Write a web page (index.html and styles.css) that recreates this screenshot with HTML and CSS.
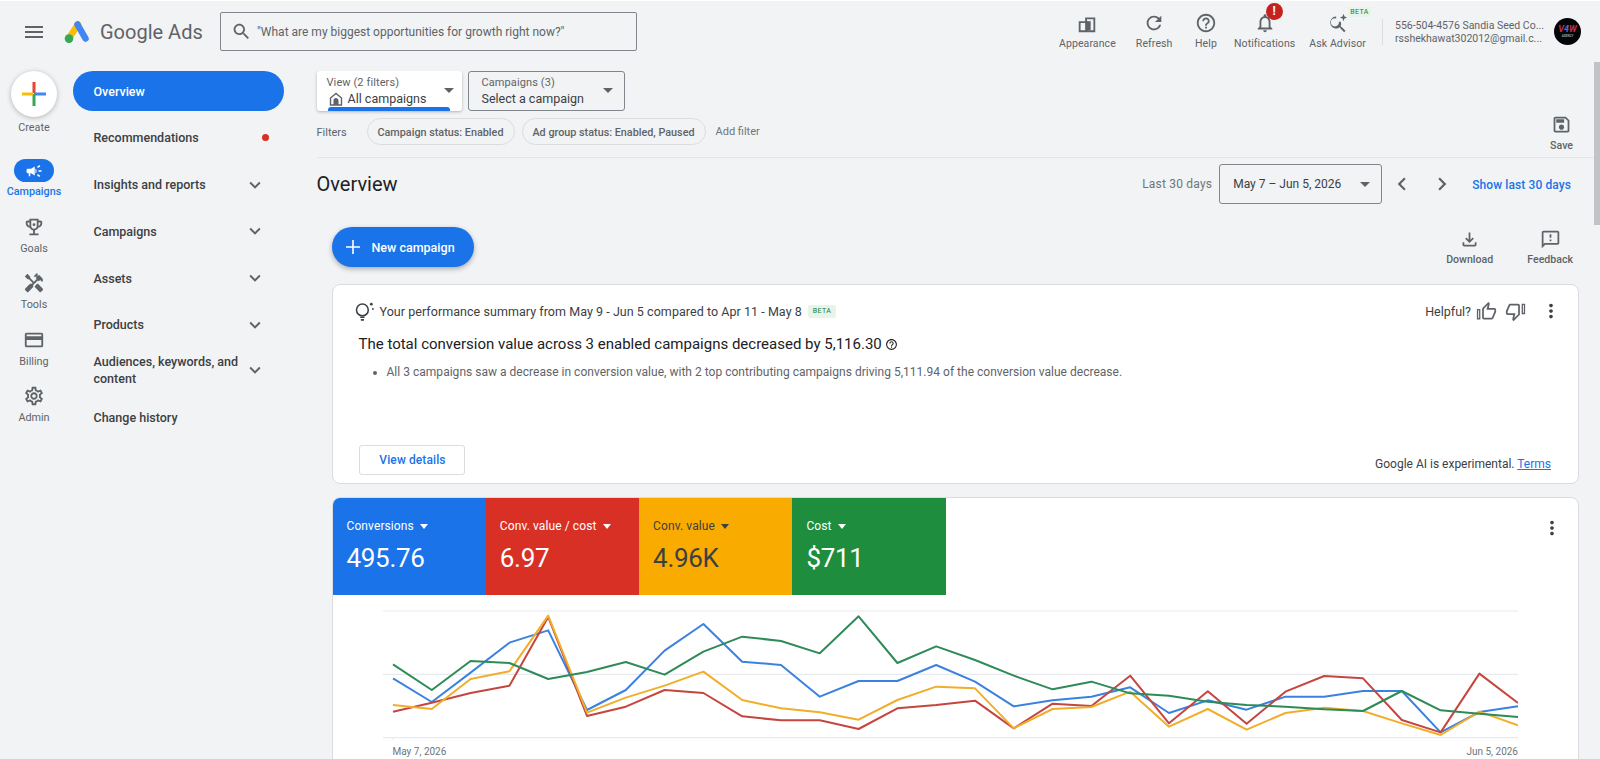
FILE: index.html
```html
<!DOCTYPE html>
<html lang="en">
<head>
<meta charset="utf-8">
<title>Google Ads Overview</title>
<link rel="stylesheet" href="styles.css">
</head>
<body>
<header class="topbar">
  <svg class="ic menu-ic" viewBox="0 0 24 24"><path d="M3 18h18v-2H3v2zm0-5h18v-2H3v2zm0-7v2h18V6H3z"/></svg>
  <div class="brand">
    <svg class="logo" viewBox="0 0 26 24">
      <path class="logo-y" d="M14 4.5 5 18"/>
      <path class="logo-b" d="M13.5 4.5 21.5 18.5"/>
      <circle class="logo-g" cx="5" cy="18.6" r="4.3"/>
    </svg>
    <span class="brand-name">Google Ads</span>
  </div>
  <div class="search">
    <svg class="ic search-ic" viewBox="0 0 24 24"><path d="M15.5 14h-.79l-.28-.27C15.41 12.59 16 11.11 16 9.5 16 5.91 13.09 3 9.5 3S3 5.91 3 9.5 5.91 16 9.5 16c1.61 0 3.09-.59 4.23-1.57l.27.28v.79l5 4.99L20.49 19l-4.99-5zm-6 0C7.01 14 5 11.99 5 9.5S7.01 5 9.5 5 14 7.01 14 9.5 11.99 14 9.5 14z"/></svg>
    <span>"What are my biggest opportunities for growth right now?"</span>
  </div>
  <nav class="top-actions">
    <div class="top-item">
      <svg class="ic top-ic" viewBox="0 0 24 24"><path d="M3 10h7V6h11v16H3zm2 2v8h5v-8zm7-4v2h1v10h6V8z"/><path d="M12 10h4v10h-4z"/></svg>
      <span>Appearance</span>
    </div>
    <div class="top-item refresh-item">
      <svg class="ic top-ic" viewBox="0 0 24 24"><path d="M17.65 6.35C16.2 4.9 14.21 4 12 4c-4.42 0-7.99 3.58-7.99 8s3.57 8 7.99 8c3.73 0 6.84-2.55 7.73-6h-2.08c-.82 2.33-3.04 4-5.65 4-3.31 0-6-2.69-6-6s2.69-6 6-6c1.66 0 3.14.69 4.22 1.78L13 11h7V4l-2.35 2.35z"/></svg>
      <span>Refresh</span>
    </div>
    <div class="top-item help-item">
      <svg class="ic top-ic" viewBox="0 0 24 24"><path d="M11 18h2v-2h-2v2zm1-16C6.48 2 2 6.48 2 12s4.48 10 10 10 10-4.48 10-10S17.52 2 12 2zm0 18c-4.41 0-8-3.59-8-8s3.59-8 8-8 8 3.59 8 8-3.59 8-8 8zm0-14c-2.21 0-4 1.79-4 4h2c0-1.1.9-2 2-2s2 .9 2 2c0 2-3 1.75-3 5h2c0-2.25 3-2.5 3-5 0-2.21-1.79-4-4-4z"/></svg>
      <span>Help</span>
    </div>
    <div class="top-item notif-item">
      <svg class="ic top-ic" viewBox="0 0 24 24"><path d="M12 22c1.1 0 2-.9 2-2h-4c0 1.1.9 2 2 2zm6-6v-5c0-3.07-1.63-5.64-4.5-6.32V4c0-.83-.67-1.5-1.5-1.5s-1.5.67-1.5 1.5v.68C7.64 5.36 6 7.92 6 11v5l-2 2v1h16v-1l-2-2zm-2 1H8v-6c0-2.48 1.51-4.5 4-4.5s4 2.02 4 4.5v6z"/></svg>
      <b class="alert">!</b>
      <span>Notifications</span>
    </div>
    <div class="top-item ask-item">
      <svg class="ic top-ic" viewBox="0 0 24 24"><path d="M10 5a6.5 6.5 0 1 0 3.9 11.7l.5.4.1.7 4.2 4.2 1.5-1.5-4.2-4.2-.7-.1-.4-.5A6.5 6.5 0 0 0 15 10.500h-2A4.500 4.500 0 1 1 10 7z"/><path d="M18 2l1.100 3 2.900 1.100-2.900 1.100L18 10.200l-1.100-3L14 6.100 16.900 5z"/></svg>
      <em class="beta top-beta">BETA</em>
      <span>Ask Advisor</span>
    </div>
    <div class="account">
      <div>556-504-4576 Sandia Seed Co...</div>
      <div>rsshekhawat302012@gmail.c...</div>
    </div>
    <div class="avatar">
      <div><span class="av-r">V</span><span class="av-b">4</span><span class="av-r">W</span></div>
      <div class="av-sub">AGENCY</div>
    </div>
  </nav>
</header>

<div class="layout">
  <aside class="rail">
    <div class="create">
      <div class="create-btn">
        <svg viewBox="0 0 24 24" class="plus">
          <rect class="p-r" x="10.500" y="0" width="3" height="11"/>
          <rect class="p-b" x="12" y="10.500" width="12" height="3"/>
          <rect class="p-g" x="10.500" y="12" width="3" height="12"/>
          <rect class="p-y" x="0" y="10.500" width="11" height="3"/>
        </svg>
      </div>
      <span>Create</span>
    </div>
    <div class="rail-item active">
      <div class="rail-pill">
        <svg class="ic" viewBox="0 0 24 24"><path d="M18 11v2h4v-2h-4zm-2 6.610c.96.710 2.210 1.650 3.200 2.390.4-.53.8-1.070 1.200-1.600-.99-.74-2.240-1.680-3.200-2.400-.4.54-.8 1.080-1.200 1.610zM20.400 5.600c-.4-.53-.8-1.070-1.200-1.600-.99.74-2.240 1.680-3.200 2.400.4.53.8 1.070 1.200 1.600.96-.72 2.210-1.650 3.200-2.400zM4 9c-1.100 0-2 .9-2 2v2c0 1.100.9 2 2 2h1v4h2v-4h1l5 3V6L8 9H4zm11.500 3c0-1.330-.58-2.530-1.500-3.350v6.690c.92-.81 1.500-2.010 1.500-3.340z"/></svg>
      </div>
      <span>Campaigns</span>
    </div>
    <div class="rail-item">
      <svg class="ic rail-ic" viewBox="0 0 24 24"><path d="M19 5h-2V3H7v2H5c-1.100 0-2 .9-2 2v1c0 2.550 1.920 4.630 4.390 4.940.63 1.500 1.980 2.630 3.610 2.960V19H7v2h10v-2h-4v-3.100c1.630-.33 2.980-1.460 3.610-2.960C19.080 12.630 21 10.550 21 8V7c0-1.100-.9-2-2-2zM5 8V7h2v3.820C5.840 10.400 5 9.300 5 8zm7 6c-1.650 0-3-1.350-3-3V5h6v6c0 1.650-1.350 3-3 3zm7-6c0 1.300-.84 2.400-2 2.820V7h2v1z"/><circle cx="12" cy="9.500" r="1.500"/></svg>
      <span>Goals</span>
    </div>
    <div class="rail-item">
      <svg class="ic rail-ic" viewBox="0 0 24 24"><path d="M21.670 18.170l-5.300-5.300h-.99l-2.540 2.540v.99l5.300 5.300c.39.39 1.020.39 1.410 0l2.120-2.120c.39-.38.39-1.020 0-1.410z"/><path d="M17.340 10.190l1.410-1.410 2.120 2.120c1.170-1.170 1.170-3.070 0-4.240l-3.540-3.540-1.410 1.410V1.710l-.7-.71-3.540 3.540.71.71h2.830l-1.410 1.410 1.060 1.060-2.890 2.890-4.130-4.130V5.060L4.830 2.040 2 4.870 5.030 7.900h1.410l4.130 4.130-.85.85H7.600l-5.300 5.300c-.39.39-.39 1.020 0 1.410l2.120 2.120c.39.39 1.020.39 1.410 0l5.300-5.300v-2.120l5.150-5.150 1.060 1.050z"/></svg>
      <span>Tools</span>
    </div>
    <div class="rail-item">
      <svg class="ic rail-ic" viewBox="0 0 24 24"><path d="M20 4H4c-1.110 0-1.990.89-1.990 2L2 18c0 1.110.89 2 2 2h16c1.110 0 2-.89 2-2V6c0-1.110-.89-2-2-2zm0 14H4v-6h16v6zm0-10H4V6h16v2z"/></svg>
      <span>Billing</span>
    </div>
    <div class="rail-item">
      <svg class="ic rail-ic" viewBox="0 0 24 24"><path d="M19.430 12.980c.04-.32.07-.64.07-.98 0-.34-.03-.66-.07-.98l2.110-1.650c.19-.15.24-.42.12-.64l-2-3.460c-.09-.16-.26-.25-.44-.25-.06 0-.12.01-.17.03l-2.490 1c-.52-.4-1.080-.73-1.690-.98l-.38-2.650C14.460 2.180 14.250 2 14 2h-4c-.25 0-.46.18-.49.42l-.38 2.650c-.61.25-1.170.59-1.690.98l-2.490-1c-.06-.02-.12-.03-.18-.03-.17 0-.34.09-.43.25l-2 3.460c-.13.22-.07.49.12.64l2.110 1.650c-.04.32-.07.65-.07.98 0 .33.03.66.07.98l-2.110 1.650c-.19.15-.24.42-.12.64l2 3.460c.09.16.26.25.44.25.06 0 .12-.01.17-.03l2.490-1c.52.4 1.080.73 1.690.98l.38 2.650c.03.24.24.42.49.42h4c.25 0 .46-.18.49-.42l.38-2.650c.61-.25 1.170-.59 1.690-.98l2.490 1c.06.02.12.03.18.03.17 0 .34-.09.43-.25l2-3.460c.12-.22.07-.49-.12-.64l-2.110-1.650zm-1.980-1.710c.04.31.05.52.05.73 0 .21-.02.43-.05.73l-.14 1.130.89.7 1.080.84-.7 1.210-1.270-.51-1.040-.42-.9.68c-.43.32-.84.56-1.250.73l-1.060.43-.16 1.130-.2 1.350h-1.400l-.19-1.350-.16-1.130-1.060-.43c-.43-.18-.83-.41-1.230-.71l-.91-.7-1.060.43-1.270.51-.7-1.210 1.080-.84.89-.7-.14-1.130c-.03-.31-.05-.54-.05-.74s.02-.43.05-.73l.14-1.130-.89-.7-1.080-.84.7-1.210 1.270.51 1.040.42.9-.68c.43-.32.84-.56 1.250-.73l1.060-.43.16-1.130.2-1.350h1.390l.19 1.350.16 1.130 1.060.43c.43.18.83.41 1.230.71l.91.7 1.060-.43 1.270-.51.7 1.210-1.070.85-.89.7.14 1.130zM12 8c-2.210 0-4 1.790-4 4s1.790 4 4 4 4-1.790 4-4-1.790-4-4-4zm0 6c-1.100 0-2-.9-2-2s.9-2 2-2 2 .9 2 2-.9 2-2 2z"/></svg>
      <span>Admin</span>
    </div>
  </aside>

  <nav class="sidenav">
    <div class="nav-item current">Overview</div>
    <div class="nav-item">Recommendations<i class="red-dot"></i></div>
    <div class="nav-item">Insights and reports<svg class="ic chev" viewBox="0 0 24 24"><path d="M16.590 8.590L12 13.170 7.410 8.590 6 10l6 6 6-6z"/></svg></div>
    <div class="nav-item">Campaigns<svg class="ic chev" viewBox="0 0 24 24"><path d="M16.590 8.590L12 13.170 7.410 8.590 6 10l6 6 6-6z"/></svg></div>
    <div class="nav-item">Assets<svg class="ic chev" viewBox="0 0 24 24"><path d="M16.590 8.590L12 13.170 7.410 8.590 6 10l6 6 6-6z"/></svg></div>
    <div class="nav-item">Products<svg class="ic chev" viewBox="0 0 24 24"><path d="M16.590 8.590L12 13.170 7.410 8.590 6 10l6 6 6-6z"/></svg></div>
    <div class="nav-item nav-two"><span class="nav-wrap">Audiences, keywords, and content</span><svg class="ic chev" viewBox="0 0 24 24"><path d="M16.590 8.590L12 13.170 7.410 8.590 6 10l6 6 6-6z"/></svg></div>
    <div class="nav-item">Change history</div>
  </nav>

  <main class="main">
    <div class="view-row">
      <div class="picker view-card">
        <div class="picker-text">
          <small>View (2 filters)</small>
          <div class="picker-value">
            <svg class="home-ic" viewBox="0 0 14 14"><path d="M1.500 13V6L7 1.500 12.500 6v7z"/><path d="M4.500 13V8.500a2.500 2.500 0 0 1 5 0V13z" class="home-door"/></svg>
            All campaigns
          </div>
        </div>
        <i class="caret"></i>
        <i class="view-bar"></i>
      </div>
      <div class="picker camp-box">
        <div class="picker-text">
          <small>Campaigns (3)</small>
          <div class="picker-value">Select a campaign</div>
        </div>
        <i class="caret"></i>
      </div>
    </div>

    <div class="filter-row">
      <span class="filter-label">Filters</span>
      <span class="chip chip-a">Campaign status: Enabled</span>
      <span class="chip chip-b">Ad group status: Enabled, Paused</span>
      <span class="add-filter">Add filter</span>
      <div class="tool save">
        <svg class="ic" viewBox="0 0 24 24"><path d="M17 3H5c-1.110 0-2 .9-2 2v14c0 1.100.89 2 2 2h14c1.100 0 2-.9 2-2V7l-4-4zm2 16H5V5h11.170L19 7.830V19zm-7-7c-1.660 0-3 1.340-3 3s1.340 3 3 3 3-1.340 3-3-1.340-3-3-3zM6 6h9v4H6z"/></svg>
        <span>Save</span>
      </div>
    </div>

    <div class="head-row">
      <h1>Overview</h1>
      <span class="last30">Last 30 days</span>
      <div class="date-box"><span>May 7 – Jun 5, 2026</span><i class="caret"></i></div>
      <svg class="ic step first" viewBox="0 0 24 24"><path d="M15.410 7.410L14 6l-6 6 6 6 1.410-1.410L10.830 12z"/></svg>
      <svg class="ic step" viewBox="0 0 24 24"><path d="M10 6L8.590 7.410 13.170 12l-4.580 4.590L10 18l6-6z"/></svg>
      <a class="show-last">Show last 30 days</a>
    </div>

    <div class="action-row">
      <button class="new-camp">
        <svg class="new-plus" viewBox="0 0 14 14"><path d="M6.200 0h1.600v6.200H14v1.600H7.800V14H6.200V7.800H0V6.200h6.200z"/></svg>
        New campaign
      </button>
      <div class="tools">
        <div class="tool">
          <svg class="ic" viewBox="0 0 24 24"><path d="M18 15v3H6v-3H4v3c0 1.100.9 2 2 2h12c1.100 0 2-.9 2-2v-3h-2zm-1-4l-1.410-1.410L13 12.170V4h-2v8.170L8.410 9.590 7 11l5 5 5-5z"/></svg>
          <span>Download</span>
        </div>
        <div class="tool">
          <svg class="ic" viewBox="0 0 24 24"><path d="M20 2H4c-1.100 0-1.990.9-1.990 2L2 22l4-4h14c1.100 0 2-.9 2-2V4c0-1.100-.9-2-2-2zm0 14H5.170L4 17.170V4h16v12zm-9-4h2v2h-2zm0-6h2v4h-2z"/></svg>
          <span>Feedback</span>
        </div>
      </div>
    </div>

    <section class="card summary">
      <div class="sum-head">
        <svg class="bulb" viewBox="0 0 20 20">
          <circle cx="8" cy="8.500" r="5.600"/><path d="M6 15.500h4M6.500 18h3"/><circle class="spark" cx="16.500" cy="3" r="1.300"/><circle class="spark" cx="18" cy="7.500" r="0.900"/>
        </svg>
        <span class="sum-text">Your performance summary from May 9 - Jun 5 compared to Apr 11 - May 8</span>
        <em class="beta">BETA</em>
        <div class="helpful">
          <span class="helpful-label">Helpful?</span>
          <svg class="ic" viewBox="0 0 24 24"><path d="M9 21h9c.83 0 1.540-.5 1.840-1.220l3.020-7.050c.09-.23.14-.47.14-.73v-2c0-1.100-.9-2-2-2h-6.310l.95-4.570.03-.32c0-.41-.17-.79-.44-1.060L14.170 1 7.580 7.590C7.220 7.950 7 8.450 7 9v10c0 1.100.9 2 2 2zM9 9l4.340-4.340L12 10h9v2l-3 7H9V9zM1 9h4v12H1zm1.500 1.500v9h1v-9z"/></svg>
          <svg class="ic" viewBox="0 0 24 24"><path d="M15 3H6c-.83 0-1.540.5-1.840 1.220l-3.020 7.050c-.09.23-.14.47-.14.730v2c0 1.100.9 2 2 2h6.310l-.95 4.570-.03.32c0 .41.17.79.44 1.060L9.830 23l6.590-6.590c.36-.36.58-.86.58-1.410V5c0-1.100-.9-2-2-2zm0 12l-4.340 4.340L12 14H3v-2l3-7h9v10zm4-12h4v12h-4zm1.500 1.500v9h1v-9z"/></svg>
          <svg class="ic dots" viewBox="0 0 24 24"><path d="M12 8c1.100 0 2-.9 2-2s-.9-2-2-2-2 .9-2 2 .9 2 2 2zm0 2c-1.100 0-2 .9-2 2s.9 2 2 2 2-.9 2-2-.9-2-2-2zm0 6c-1.100 0-2 .9-2 2s.9 2 2 2 2-.9 2-2-.9-2-2-2z"/></svg>
        </div>
      </div>
      <h2>The total conversion value across 3 enabled campaigns decreased by 5,116.30
        <svg class="ic h2-help" viewBox="0 0 24 24"><path d="M11 18h2v-2h-2v2zm1-16C6.480 2 2 6.480 2 12s4.480 10 10 10 10-4.480 10-10S17.520 2 12 2zm0 18c-4.410 0-8-3.590-8-8s3.590-8 8-8 8 3.590 8 8-3.590 8-8 8zm0-14c-2.210 0-4 1.790-4 4h2c0-1.100.9-2 2-2s2 .9 2 2c0 2-3 1.750-3 5h2c0-2.250 3-2.500 3-5 0-2.210-1.790-4-4-4z"/></svg>
      </h2>
      <ul>
        <li>All 3 campaigns saw a decrease in conversion value, with 2 top contributing campaigns driving 5,111.94 of the conversion value decrease.</li>
      </ul>
      <div class="sum-foot">
        <button class="details">View details</button>
        <span class="ai-note">Google AI is experimental. <a>Terms</a></span>
      </div>
    </section>

    <section class="card perf">
      <div class="tiles">
        <div class="tile t-blue"><div class="t-label">Conversions<i class="caret"></i></div><div class="t-value">495.76</div></div>
        <div class="tile t-red"><div class="t-label">Conv. value / cost<i class="caret"></i></div><div class="t-value">6.97</div></div>
        <div class="tile t-yellow"><div class="t-label">Conv. value<i class="caret"></i></div><div class="t-value">4.96K</div></div>
        <div class="tile t-green"><div class="t-label">Cost<i class="caret"></i></div><div class="t-value">$711</div></div>
        <svg class="ic perf-dots" viewBox="0 0 24 24"><path d="M12 8c1.100 0 2-.9 2-2s-.9-2-2-2-2 .9-2 2 .9 2 2 2zm0 2c-1.100 0-2 .9-2 2s.9 2 2 2 2-.9 2-2-.9-2-2-2zm0 6c-1.100 0-2 .9-2 2s.9 2 2 2 2-.9 2-2-.9-2-2-2z"/></svg>
      </div>
      <svg class="chart" viewBox="-10 330 1135 435" preserveAspectRatio="none">
        <path class="grid" d="M-10 363H1125M-10 553H1125M-10 743H1125M0 743V750M1125 743V750"/>
        <polyline class="l-blue" points="0,565 38.800,636 77.600,548 116.400,458 155.200,421 194,660 232.800,600 271.600,482 310.400,402 349.200,515 388,525 426.800,620 465.600,573 504.400,573 543.200,525 582,575 620.800,649 659.600,631 698.400,620 737.200,592 776,669 814.800,631 853.600,659 892.400,620 931.200,620 970,603 1008.800,603 1047.600,727 1086.400,666 1125,649"/>
        <polyline class="l-red" points="0,665 38.800,638 77.600,609 116.400,587 155.200,381 194,678 232.800,650 271.600,600 310.400,609 349.200,679 388,691 426.800,691 465.600,717 504.400,655 543.200,645 582,632 620.800,715 659.600,641 698.400,648 737.200,557 776,700 814.800,604 853.600,701 892.400,605 931.200,558 970,565 1008.800,690 1047.600,727 1086.400,551 1125,639"/>
        <polyline class="l-yellow" points="0,645 38.800,657 77.600,567 116.400,544 155.200,377 194,668 232.800,623 271.600,587 310.400,545 349.200,630 388,655 426.800,667 465.600,689 504.400,630 543.200,590 582,595 620.800,715 659.600,657 698.400,651 737.200,605 776,710 814.800,657 853.600,719 892.400,669 931.200,653 970,663 1008.800,700 1047.600,735 1086.400,665 1125,706"/>
        <polyline class="l-green" points="0,523 38.800,600 77.600,513 116.400,519 155.200,567 194,546 232.800,516 271.600,554 310.400,485 349.200,440 388,453 426.800,490 465.600,379 504.400,519 543.200,469 582,510 620.800,557 659.600,598 698.400,575 737.200,610 776,617 814.800,635 853.600,645 892.400,650 931.200,658 970,663 1008.800,603 1047.600,661 1086.400,671 1125,681"/>
      </svg>
      <div class="chart-dates"><span>May 7, 2026</span><span>Jun 5, 2026</span></div>
    </section>
  </main>
</div>
<div class="scroll-thumb"></div>
</body>
</html>
```

FILE: styles.css
```css
* { box-sizing: border-box; }
html, body { margin: 0; height: 759px; overflow: hidden; }
body {
  background: #f1f3f4;
  font-family: Roboto, "Liberation Sans", sans-serif;
  color: #3c4043;
  display: flex;
  flex-direction: column;
}
.ic { fill: currentColor; display: block; flex: none; }
i, em { font-style: normal; }

.caret {
  display: inline-block;
  width: 0;
  height: 0;
  border-left: 5px solid transparent;
  border-right: 5px solid transparent;
  border-top: 5px solid #5f6368;
  flex: none;
}

/* top bar */
.topbar {
  height: 64px;
  flex: none;
  border-top: 1px solid #fff;
  padding: 0 19px 2px 22px;
  display: flex;
  align-items: center;
  color: #5f6368;
}
.menu-ic { width: 24px; height: 24px; }
.brand { width: 174px; display: flex; align-items: center; padding-left: 18px; gap: 10px; }
.logo { width: 26px; height: 24px; flex: none; }
.logo path { fill: none; stroke-width: 6.5; stroke-linecap: round; }
.logo-y { stroke: #fbbc04; }
.logo-b { stroke: #4285f4; }
.logo-g { fill: #34a853; }
.brand-name { font-size: 20px; color: #5f6368; white-space: nowrap; }
.search {
  width: 417px;
  height: 39px;
  border: 1px solid #80868b;
  border-radius: 2px;
  display: flex;
  align-items: center;
  padding-left: 10px;
  gap: 5px;
  font-size: 12px;
  color: #5f6368;
}
.search-ic { width: 21px; height: 21px; }
.top-actions { margin-left: auto; display: flex; align-items: center; gap: 18px; }
.top-item {
  display: flex;
  flex-direction: column;
  align-items: center;
  font-size: 10.5px;
  letter-spacing: .1px;
  position: relative;
  color: #5f6368;
  line-height: 14px;
}
.refresh-item { margin-left: 2px; }
.help-item { margin-left: 4.5px; }
.notif-item { margin-left: -1px; }
.ask-item { margin-left: -4px; }
.top-ic { width: 22px; height: 22px; margin-bottom: 3px; }
.alert {
  position: absolute;
  left: 50%;
  top: -9px;
  margin-left: 1px;
  width: 17px;
  height: 17px;
  border-radius: 50%;
  background: #c5221f;
  color: #fff;
  font-size: 12px;
  line-height: 17px;
  text-align: center;
  font-weight: 700;
}
.beta {
  background: #e6f4ea;
  color: #188038;
  font-size: 7px;
  line-height: 13px;
  height: 13px;
  padding: 0 5px;
  letter-spacing: .4px;
  border-radius: 2px;
}
.top-beta { position: absolute; left: 39px; top: -5px; line-height: 10px; height: 10px; padding: 0 2px; }
.account {
  border-left: 1px solid #dadce0;
  padding-left: 12px;
  margin-left: -2px;
  margin-right: -18px;
  font-size: 10.5px;
  line-height: 13px;
  width: 172px;
  white-space: nowrap;
  color: #5f6368;
}
.avatar {
  width: 27px;
  height: 27px;
  border-radius: 50%;
  background: #050508;
  display: flex;
  flex-direction: column;
  align-items: center;
  justify-content: center;
  font-size: 9px;
  line-height: 9px;
  font-style: italic;
  font-weight: 700;
}
.av-r { color: #c2304a; }
.av-b { color: #4b6fd8; }
.av-sub { font-size: 3px; line-height: 4px; color: #9aa0a6; font-style: normal; }

/* layout */
.layout { flex: 1; display: flex; min-height: 0; padding-top: 7px; }

/* rail */
.rail { width: 68px; flex: none; display: flex; flex-direction: column; align-items: center; font-size: 10.8px; color: #5f6368; }
.create { display: flex; flex-direction: column; align-items: center; height: 88px; line-height: 16px; }
.create-btn {
  width: 46px;
  height: 46px;
  border-radius: 50%;
  background: #fff;
  box-shadow: 0 1px 5px rgba(60,64,67,.35);
  display: flex;
  align-items: center;
  justify-content: center;
  margin-bottom: 3px;
}
.plus { width: 24px; height: 24px; }
.p-r { fill: #ea4335; } .p-b { fill: #4285f4; } .p-g { fill: #34a853; } .p-y { fill: #fbbc04; }
.rail-item { height: 56.5px; display: flex; flex-direction: column; align-items: center; line-height: 16px; }
.rail-ic { width: 22px; height: 22px; margin: 0 0 3px; }
.rail-pill {
  width: 40px;
  height: 23px;
  border-radius: 12px;
  background: #1a73e8;
  color: #fff;
  display: flex;
  align-items: center;
  justify-content: center;
  margin-bottom: 2px;
}
.rail-pill svg { width: 18px; height: 18px; }
.active { color: #1a73e8; font-weight: 500; }

/* side nav */
.sidenav { width: 211px; margin-left: 4.5px; flex: none; display: flex; flex-direction: column; gap: 6.8px; }
.nav-item {
  height: 40px;
  padding: 0 18px 0 21px;
  display: flex;
  align-items: center;
  justify-content: space-between;
  font-size: 12.5px;
  font-weight: 500;
  color: #3c4043;
}
.nav-two { margin-top: -1.5px; }
.nav-item.current { background: #1a73e8; color: #fff; border-radius: 20px; }
.nav-wrap { width: 152px; line-height: 17px; }
.chev { width: 22px; height: 22px; color: #5f6368; }
.red-dot { width: 7px; height: 7px; border-radius: 50%; background: #d93025; margin-right: -3px; }

/* main */
.main { flex: 1; min-width: 0; padding-left: 33px; margin-right: 6px; overflow: hidden; }
.view-row { display: flex; gap: 6px; }
.picker { height: 40px; display: flex; align-items: center; justify-content: space-between; border-radius: 3px; position: relative; }
.view-card { width: 145px; background: #fff; box-shadow: 0 1px 3px rgba(60,64,67,.35); padding: 0 8px 0 10px; }
.camp-box { width: 157px; border: 1px solid #80868b; padding: 0 11px 0 13px; }
.picker-text { display: flex; flex-direction: column; }
.picker small { font-size: 11px; line-height: 14px; color: #5f6368; letter-spacing: .1px; }
.picker-value { font-size: 12.5px; line-height: 16px; display: flex; align-items: center; gap: 5px; color: #3c4043; margin-top: 1px; }
.picker .caret { margin-top: -1px; }
.home-ic { width: 14px; height: 14px; margin-left: 2px; fill: none; stroke: #5f6368; stroke-width: 1.4; }
.home-door { fill: #5f6368; stroke: none; }
.view-bar { position: absolute; left: 11px; right: 12px; bottom: 0; height: 4px; background: #1a73e8; border-radius: 3px 3px 0 0; }

.filter-row {
  margin-top: 7px;
  height: 40px;
  border-bottom: 1px solid #e3e5e8;
  display: flex;
  align-items: flex-start;
  font-size: 11px;
  color: #5f6368;
}
.filter-label { width: 50px; line-height: 29px; }
.chip {
  height: 27px;
  border: 1px solid #dadce0;
  border-radius: 14px;
  display: flex;
  align-items: center;
  justify-content: center;
  padding-top: 1px;
  font-size: 10.8px;
  font-weight: 500;
}
.chip-a { width: 148px; margin-right: 7px; }
.chip-b { width: 184px; margin-right: 10px; }
.add-filter { line-height: 28px; color: #70757a; }
.tool { display: flex; flex-direction: column; align-items: center; font-size: 10.6px; line-height: 14px; color: #5f6368; font-weight: 500; }
.tool .ic { width: 21px; height: 21px; margin-bottom: 3px; }
.save { margin: -4px 21px 0 auto; }
.save .ic { margin-bottom: 4px; }

.head-row { height: 40px; margin-top: 6px; display: flex; align-items: center; }
h1 { margin: 0 auto 0 0; font-size: 20px; font-weight: 400; color: #202124; }
.last30 { font-size: 12px; color: #70757a; letter-spacing: .2px; margin-right: 7px; }
.date-box {
  width: 163px;
  height: 40px;
  border: 1px solid #80868b;
  border-radius: 3px;
  display: flex;
  align-items: center;
  justify-content: space-between;
  padding: 0 11px 0 13px;
  font-size: 12px;
}
.step { width: 26px; height: 26px; color: #5f6368; }
.step.first { margin-left: 7px; margin-right: 14px; }
.show-last { margin-left: 17px; margin-right: 23px; padding-top: 1px; font-size: 12px; font-weight: 500; color: #1a73e8; letter-spacing: .1px; }

.action-row { margin: 23px 16px 0 15px; height: 40px; display: flex; justify-content: space-between; }
.new-camp {
  width: 142px;
  height: 40px;
  border: 0;
  border-radius: 20px;
  background: #1a73e8;
  color: #fff;
  font: 500 12.5px Roboto, sans-serif;
  display: flex;
  align-items: center;
  gap: 12px;
  padding: 0 0 0 14px;
  box-shadow: 0 2px 5px rgba(60,64,67,.4);
}
.new-plus { width: 14px; height: 14px; fill: #fff; }
.tools { display: flex; gap: 34px; padding: 2px 5px 0 0; }

.card { background: #fff; border: 1px solid #dadce0; border-radius: 8px; margin: 0 15px; }
.summary { margin-top: 17px; height: 200px; padding: 17px 16px 8px 21px; display: flex; flex-direction: column; }
.sum-head { display: flex; align-items: center; height: 18px; }
.bulb { width: 21px; height: 21px; fill: none; stroke: #3c4043; stroke-width: 1.5; margin-right: 5px; flex: none; }
.spark { fill: #3c4043; stroke: none; }
.sum-text { font-size: 12.5px; color: #3c4043; letter-spacing: .05px; }
.summary .beta { margin-left: 6px; }
.helpful { margin-left: auto; display: flex; align-items: center; gap: 8px; font-size: 12.5px; color: #3c4043; }
.helpful-label { margin-right: -3px; }
.helpful .ic { width: 21px; height: 21px; color: #5f6368; }
.helpful .dots { margin-left: 6px; width: 22px; height: 22px; color: #3c4043; }
h2 { margin: 13px 0 0 5px; font-size: 15px; line-height: 22px; font-weight: 400; color: #202124; display: flex; align-items: center; gap: 3px; }
.h2-help { width: 13px; height: 13px; }
ul { margin: 8px 0 0; padding: 0 0 0 33px; font-size: 12px; line-height: 18px; color: #5f6368; letter-spacing: .02px; }
.sum-foot { margin-top: auto; display: flex; justify-content: space-between; align-items: flex-end; padding-left: 5px; }
.details {
  width: 106px;
  height: 30px;
  background: #fff;
  border: 1px solid #dadce0;
  border-radius: 3px;
  color: #1a73e8;
  font: 500 12px Roboto, sans-serif;
  letter-spacing: .1px;
  padding-left: 8px;
}
.ai-note { font-size: 12px; color: #3c4043; padding: 0 11px 4px 0; }
.ai-note a { color: #1a73e8; text-decoration: underline; }

.perf { margin-top: 13px; height: 300px; overflow: hidden; }
.tiles { display: flex; height: 97px; }
.tile { width: 153.3px; padding: 20px 0 0 14px; color: #fff; }
.t-blue { background: #1a73e8; }
.t-red { background: #d93025; }
.t-yellow { background: #f9ab00; color: #3c4043; }
.t-green { background: #1e8e3e; }
.t-label { font-size: 12px; line-height: 16px; display: flex; align-items: center; gap: 6px; letter-spacing: .1px; }
.t-label .caret { border-top-color: currentColor; border-left-width: 4.5px; border-right-width: 4.5px; }
.t-value { font-size: 26px; line-height: 36px; margin-top: 6px; letter-spacing: -.3px; }
.perf-dots { width: 22px; height: 22px; margin: 19px 15px 0 auto; color: #3c4043; }
.chart { display: block; width: 1135px; height: 145px; margin: 5px 0 0 50px; }
.chart .grid { fill: none; stroke: #e8eaed; stroke-width: 1.2; vector-effect: non-scaling-stroke; }
.chart polyline { fill: none; stroke-width: 2; stroke-linejoin: round; vector-effect: non-scaling-stroke; }
.l-blue { stroke: #3b82e0; }
.l-red { stroke: #c5453f; }
.l-yellow { stroke: #f0ae2a; }
.l-green { stroke: #2e8b57; }
.chart-dates { display: flex; justify-content: space-between; margin: 0 60px; font-size: 10px; line-height: 14px; color: #70757a; }

.scroll-thumb { position: absolute; top: 62px; right: 0; width: 6px; height: 163px; background: #c1c3c6; }
```
